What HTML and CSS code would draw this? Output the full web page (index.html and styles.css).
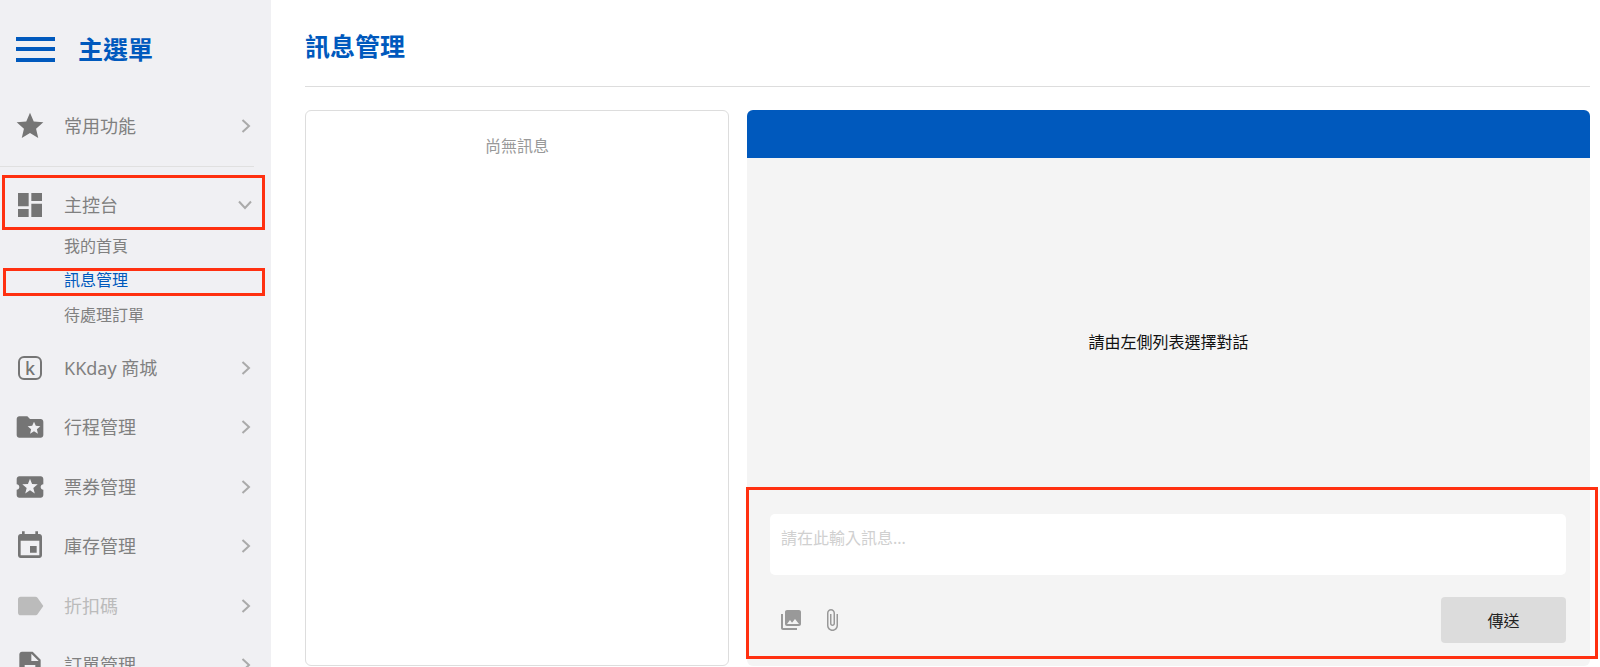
FILE: index.html
```html
<!DOCTYPE html>
<html lang="zh-Hant">
<head>
<meta charset="utf-8">
<title>訊息管理</title>
<link rel="stylesheet" href="styles.css">
</head>
<body>
<div class="app">
  <nav class="sidebar">
    <div class="side-head">
      <div class="burger"><span></span><span></span><span></span></div>
      <div class="side-title">主選單</div>
    </div>
    <a class="row">
      <svg class="ico" viewBox="0 0 24 24"><path d="M12 17.27L18.18 21l-1.64-7.03L22 9.24l-7.19-.61L12 2 9.19 8.63 2 9.24l5.46 4.73L5.82 21z"/></svg>
      <span class="label">常用功能</span>
      <svg class="chev" viewBox="0 0 10 16"><path d="M1.5 2l6.5 6-6.5 6"/></svg>
    </a>
    <div class="side-rule"></div>
    <a class="row row-open">
      <svg class="ico" viewBox="0 0 24 24"><path d="M3 13h8V3H3v10zm0 8h8v-6H3v6zm10 0h8V11h-8v10zm0-18v6h8V3h-8z"/></svg>
      <span class="label">主控台</span>
      <svg class="chev-down" viewBox="0 0 16 10"><path d="M2 1.5l6 6.5 6-6.5"/></svg>
    </a>
    <div class="subs">
      <a class="sub">我的首頁</a>
      <a class="sub sub-active">訊息管理</a>
      <a class="sub">待處理訂單</a>
    </div>
    <a class="row">
      <svg class="ico" viewBox="0 0 32 32"><rect x="5" y="5" width="22" height="22" rx="5" class="ko"/><text x="16" y="22.5" text-anchor="middle" class="kt">k</text></svg>
      <span class="label">KKday 商城</span>
      <svg class="chev" viewBox="0 0 10 16"><path d="M1.5 2l6.5 6-6.5 6"/></svg>
    </a>
    <a class="row">
      <svg class="ico" viewBox="0 0 24 24"><path d="M20 6h-8l-2-2H4c-1.1 0-1.99.9-1.99 2L2 18c0 1.1.9 2 2 2h16c1.1 0 2-.9 2-2V8c0-1.1-.9-2-2-2zm-2.06 11L15 15.28 12.06 17l.78-3.33-2.59-2.24 3.41-.29L15 8l1.34 3.14 3.41.29-2.59 2.24.78 3.33z"/></svg>
      <span class="label">行程管理</span>
      <svg class="chev" viewBox="0 0 10 16"><path d="M1.5 2l6.5 6-6.5 6"/></svg>
    </a>
    <a class="row">
      <svg class="ico" viewBox="0 0 24 24"><path d="M20 12c0-1.1.9-2 2-2V6c0-1.1-.9-2-2-2H4c-1.1 0-1.99.9-1.99 2v4c1.1 0 1.99.9 1.99 2s-.89 2-2 2v4c0 1.1.9 2 2 2h16c1.1 0 2-.9 2-2v-4c-1.1 0-2-.9-2-2zm-4.42 4.8L12 14.5l-3.58 2.3 1.08-4.12-3.29-2.69 4.24-.25L12 5.8l1.54 3.95 4.24.25-3.29 2.69 1.09 4.11z"/></svg>
      <span class="label">票券管理</span>
      <svg class="chev" viewBox="0 0 10 16"><path d="M1.5 2l6.5 6-6.5 6"/></svg>
    </a>
    <a class="row">
      <svg class="ico" viewBox="0 0 24 24"><path d="M17 12h-5v5h5v-5zM16 1v2H8V1H6v2H5c-1.11 0-1.99.9-1.99 2L3 19c0 1.1.89 2 2 2h14c1.1 0 2-.9 2-2V5c0-1.1-.9-2-2-2h-1V1h-2zm3 18H5V8h14v11z"/></svg>
      <span class="label">庫存管理</span>
      <svg class="chev" viewBox="0 0 10 16"><path d="M1.5 2l6.5 6-6.5 6"/></svg>
    </a>
    <a class="row row-muted">
      <svg class="ico" viewBox="0 0 24 24"><path d="M17.63 5.84C17.27 5.33 16.67 5 16 5L5 5.01C3.9 5.01 3 5.9 3 7v10c0 1.1.9 1.99 2 1.99L16 19c.67 0 1.27-.33 1.63-.84L22 12l-4.37-6.16z"/></svg>
      <span class="label">折扣碼</span>
      <svg class="chev" viewBox="0 0 10 16"><path d="M1.5 2l6.5 6-6.5 6"/></svg>
    </a>
    <a class="row">
      <svg class="ico" viewBox="0 0 24 24"><path d="M14 2H6c-1.1 0-1.99.9-1.99 2L4 20c0 1.1.89 2 1.99 2H18c1.1 0 2-.9 2-2V8l-6-6zm2 16H8v-2h8v2zm0-4H8v-2h8v2zm-3-5V3.5L18.5 9H13z"/></svg>
      <span class="label">訂單管理</span>
      <svg class="chev" viewBox="0 0 10 16"><path d="M1.5 2l6.5 6-6.5 6"/></svg>
    </a>
  </nav>
  <main class="main">
    <header class="page-head"><h1 class="page-title">訊息管理</h1></header>
    <div class="panels">
      <section class="list-panel">尚無訊息</section>
      <section class="chat-panel">
        <div class="chat-bar"></div>
        <div class="chat-body">請由左側列表選擇對話</div>
        <div class="composer">
          <textarea class="input" placeholder="請在此輸入訊息..."></textarea>
          <div class="tools">
            <svg class="tool" viewBox="0 0 24 24"><path d="M22 16V4c0-1.1-.9-2-2-2H8c-1.1 0-2 .9-2 2v12c0 1.1.9 2 2 2h12c1.1 0 2-.9 2-2zm-11-4l2.03 2.71L16 11l4 5H8l3-4zM2 6v14c0 1.1.9 2 2 2h14v-2H4V6H2z"/></svg>
            <svg class="tool" viewBox="0 0 24 24"><path d="M16.5 6v11.5c0 2.21-1.79 4-4 4s-4-1.79-4-4V5c0-1.38 1.12-2.5 2.5-2.5s2.5 1.12 2.5 2.5v10.5c0 .55-.45 1-1 1s-1-.45-1-1V6H10v9.5c0 1.38 1.12 2.5 2.5 2.5s2.5-1.12 2.5-2.5V5c0-2.21-1.79-4-4-4S7 2.79 7 5v12.5c0 3.04 2.46 5.5 5.5 5.5s5.5-2.46 5.5-5.5V6h-1.5z"/></svg>
            <button class="send">傳送</button>
          </div>
        </div>
      </section>
    </div>
  </main>
</div>
<div class="mark mark-console"></div>
<div class="mark mark-messages"></div>
<div class="mark mark-composer"></div>
</body>
</html>
```

FILE: styles.css
```css
* { box-sizing: border-box; }
html, body { margin: 0; height: 667px; overflow: hidden; background: #fff; }
body { font-family: "Noto Sans", "Noto Sans CJK TC", sans-serif; position: relative; }
.app { display: flex; height: 667px; }

.sidebar { width: 271px; flex: none; background: #f0f0f3; overflow: hidden; }
.side-head { height: 96px; padding: 2px 0 0 16px; display: flex; align-items: center; gap: 23px; }
.burger { width: 39px; height: 25px; display: flex; flex-direction: column; justify-content: space-between; }
.burger span { height: 4px; background: #0059bd; }
.side-title { font-size: 25px; font-weight: 700; color: #0059bd; line-height: 1; }

.row { height: 59.5px; display: flex; align-items: center; padding: 0 20px 0 14px; color: #808080; }
.row-open { height: 48px; margin-top: 14px; }
.row-muted { color: #bbb; }
.ico { width: 32px; height: 32px; fill: #757575; flex: none; }
.row-muted .ico { fill: #bbb; }
.ko { fill: none; stroke: #757575; stroke-width: 2; }
.kt { font-family: "Noto Sans", sans-serif; font-size: 18px; fill: #757575; font-weight: 500; }
.label { font-size: 18px; margin-left: 18px; padding-bottom: 2px; flex: 1; white-space: nowrap; }
.chev { width: 10px; height: 16px; fill: none; stroke: #aaa; stroke-width: 2; flex: none; }
.chev-down { width: 16px; height: 10px; fill: none; stroke: #aaa; stroke-width: 2; flex: none; margin-right: -2px; }
.side-rule { height: 1px; width: 254px; margin-top: 10px; background: #e0e0e0; }

.subs { margin-bottom: 6px; }
.sub { display: flex; align-items: center; height: 34.5px; padding: 0 0 2px 64px; font-size: 16px; color: #808080; }
.sub-active { color: #0059bd; }

.main { flex: 1; min-width: 0; padding: 0 10px 0 34px; display: flex; flex-direction: column; }
.page-head { height: 87px; border-bottom: 1px solid #ddd; display: flex; align-items: center; padding-top: 6px; }
.page-title { margin: 0; font-size: 25px; font-weight: 700; color: #0059bd; line-height: 1.2; }

.panels { display: flex; gap: 18px; margin-top: 23px; height: 556px; }
.list-panel { width: 424px; flex: none; border: 1px solid #ddd; border-radius: 6px; padding-top: 23px; text-align: center; font-size: 16px; line-height: 24px; color: #999; }
.chat-panel { flex: 1; min-width: 0; display: flex; flex-direction: column; background: #f4f4f4; border-radius: 6px; overflow: hidden; }
.chat-bar { height: 48px; flex: none; background: #0059bd; }
.chat-body { flex: 1; padding-top: 34px; display: flex; align-items: center; justify-content: center; font-size: 16px; color: #111; }
.composer { flex: none; padding: 24px 24px 23px 23px; }
.input { display: block; width: 100%; height: 61px; border: 0; outline: 0; resize: none; background: #fff; border-radius: 5px; padding: 12px 11px; font: inherit; font-size: 16px; line-height: 24px; }
.input::placeholder { color: #d0d0d0; opacity: 1; }
.tools { display: flex; align-items: center; gap: 17px; margin-top: 22px; padding-left: 9px; }
.tool { width: 24px; height: 24px; fill: #999; flex: none; }
.send { margin-left: auto; width: 125px; height: 46px; border: 0; border-radius: 4px; background: #dcdcdc; font: inherit; font-size: 16px; color: #222; }

.mark { position: absolute; border: 3px solid #ff3010; pointer-events: none; }
.mark-console { left: 2px; top: 175px; width: 263px; height: 55px; }
.mark-messages { left: 3px; top: 268px; width: 262px; height: 28px; }
.mark-composer { left: 746px; top: 487px; width: 852px; height: 172px; }
```
